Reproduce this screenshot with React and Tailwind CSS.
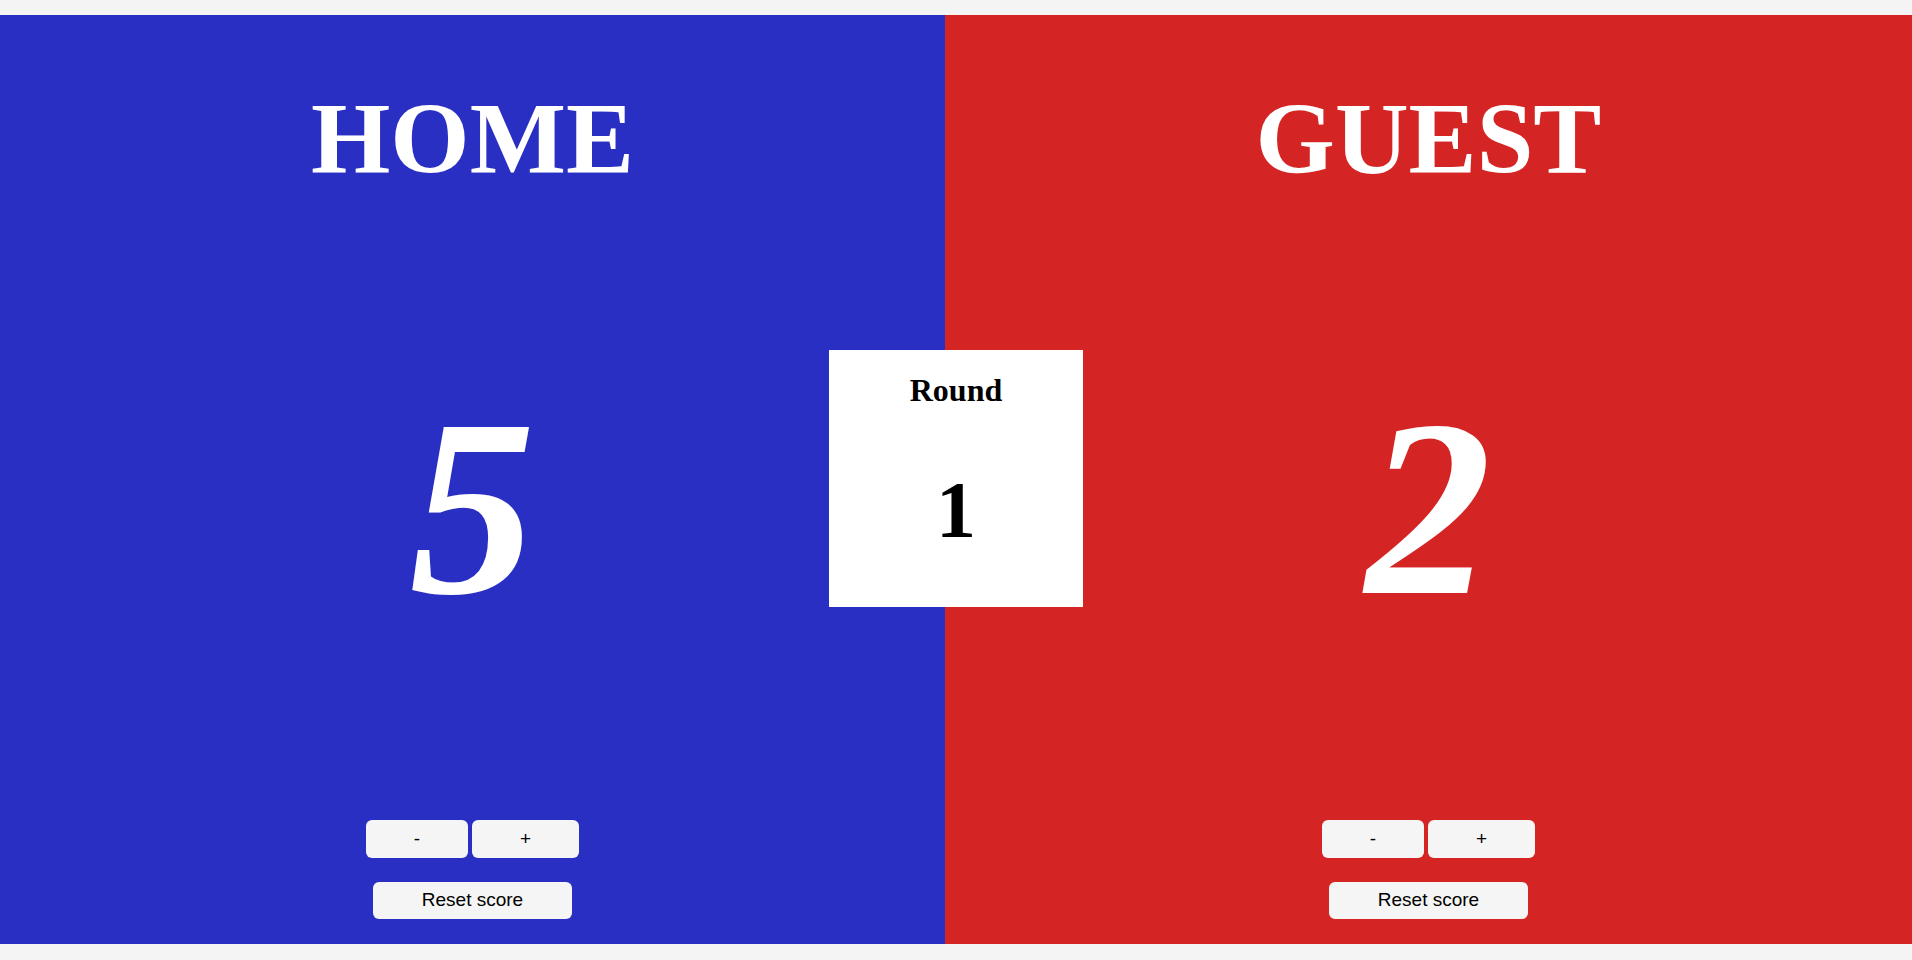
export default function App() {
  const serif = { fontFamily: '"Liberation Serif", "Times New Roman", serif' };
  const Btns = () => (
    <div className="flex flex-col items-center gap-[24px]" style={{ fontFamily: '"Liberation Sans", Arial, sans-serif' }}>
      <div className="flex gap-[4px]">
        <button className="w-[102px] h-[38px] bg-[#f5f5f5] rounded-[6px] text-[19px] text-black">-</button>
        <button className="w-[107px] h-[38px] bg-[#f5f5f5] rounded-[6px] text-[19px] text-black">+</button>
      </div>
      <button className="w-[199px] h-[37px] bg-[#f5f5f5] rounded-[6px] text-[19px] text-black">Reset score</button>
    </div>
  );
  return (
    <div className="w-full h-[960px] bg-[#f4f4f4] py-[15px] pb-[16px]">
      <div className="relative flex h-[929px]">
        <div className="w-[945px] bg-[#292fc3] flex flex-col items-center text-white">
          <h1 className="text-[102px] font-bold leading-none mt-[73px]" style={serif}>HOME</h1>
          <div className="text-[252px] font-bold italic leading-none mt-[192px]" style={serif}>5</div>
          <div className="mt-auto mb-[25px]"><Btns /></div>
        </div>
        <div className="flex-1 bg-[#d52424] flex flex-col items-center text-white">
          <h1 className="text-[102px] font-bold leading-none mt-[73px]" style={serif}>GUEST</h1>
          <div className="text-[252px] font-bold italic leading-none mt-[192px]" style={serif}>2</div>
          <div className="mt-auto mb-[25px]"><Btns /></div>
        </div>
        <div className="absolute left-[829px] top-[335px] w-[254px] h-[257px] bg-white flex flex-col items-center text-black" style={serif}>
          <h2 className="text-[32px] font-bold leading-none mt-[24px]">Round</h2>
          <div className="text-[80px] font-bold leading-none mt-[64px]">1</div>
        </div>
      </div>
    </div>
  );
}
